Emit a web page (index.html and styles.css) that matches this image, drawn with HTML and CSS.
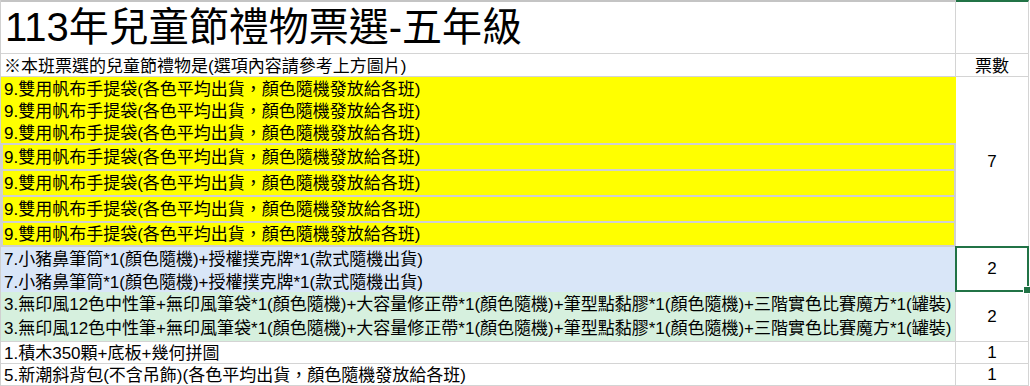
FILE: index.html
```html
<!DOCTYPE html>
<html lang="zh-Hant">
<head>
<meta charset="utf-8">
<title>113年兒童節禮物票選-五年級</title>
<link rel="stylesheet" href="styles.css">
</head>
<body>
<div class="sheet">
  <div class="cell a title">113年兒童節禮物票選-五年級</div>
  <div class="cell b title-b"></div>

  <div class="cell a hdr">※本班票選的兒童節禮物是(選項內容請參考上方圖片)</div>
  <div class="cell b hdr">票數</div>

  <div class="cell a group yellow">
    <div class="line">9.雙用帆布手提袋(各色平均出貨，顏色隨機發放給各班)</div>
    <div class="line">9.雙用帆布手提袋(各色平均出貨，顏色隨機發放給各班)</div>
    <div class="line">9.雙用帆布手提袋(各色平均出貨，顏色隨機發放給各班)</div>
    <div class="line boxed">9.雙用帆布手提袋(各色平均出貨，顏色隨機發放給各班)</div>
    <div class="line boxed">9.雙用帆布手提袋(各色平均出貨，顏色隨機發放給各班)</div>
    <div class="line boxed">9.雙用帆布手提袋(各色平均出貨，顏色隨機發放給各班)</div>
    <div class="line boxed last">9.雙用帆布手提袋(各色平均出貨，顏色隨機發放給各班)</div>
  </div>
  <div class="cell b num g-yellow">7</div>

  <div class="cell a group blue">
    <div class="line">7.小豬鼻筆筒*1(顏色隨機)+授權撲克牌*1(款式隨機出貨)</div>
    <div class="line l23">7.小豬鼻筆筒*1(顏色隨機)+授權撲克牌*1(款式隨機出貨)</div>
  </div>
  <div class="cell b num g-blue selected">2</div>

  <div class="cell a group green">
    <div class="line l25">3.無印風12色中性筆+無印風筆袋*1(顏色隨機)+大容量修正帶*1(顏色隨機)+筆型點黏膠*1(顏色隨機)+三階實色比賽魔方*1(罐裝)</div>
    <div class="line l24">3.無印風12色中性筆+無印風筆袋*1(顏色隨機)+大容量修正帶*1(顏色隨機)+筆型點黏膠*1(顏色隨機)+三階實色比賽魔方*1(罐裝)</div>
  </div>
  <div class="cell b num g-green">2</div>

  <div class="cell a row">1.積木350顆+底板+幾何拼圖</div>
  <div class="cell b num row">1</div>

  <div class="cell a row">5.新潮斜背包(不含吊飾)(各色平均出貨，顏色隨機發放給各班)</div>
  <div class="cell b num row">1</div>
</div>
</body>
</html>
```

FILE: styles.css
```css
* { box-sizing: border-box; }

html, body {
  margin: 0;
  padding: 0;
  background: #ffffff;
}

body {
  font-family: "Liberation Sans", "Noto Sans CJK TC", sans-serif;
  color: #000000;
  font-size: 17px;
}

.sheet {
  display: grid;
  grid-template-columns: 955px 73px;
  width: 1029px;
  border-left: 1px solid #d0d0d0;
}

.cell {
  border-right: 1px solid #d4d4d4;
  border-bottom: 1px solid #d4d4d4;
  white-space: nowrap;
  overflow: hidden;
}

.a { padding-left: 3px; }

.title {
  height: 54px;
  border-top: 2px solid #c4c4c4;
  font-size: 40px;
  line-height: 51px;
  padding-left: 4px;
}

.title-b {
  height: 54px;
  border-top: 2px solid #217346;
}

.hdr {
  height: 23px;
  line-height: 22px;
  padding-top: 2px;
}

.b.hdr { text-align: center; }

.num {
  display: flex;
  align-items: center;
  justify-content: center;
}

.group {
  padding-left: 0;
  border-bottom: none;
  display: flex;
  flex-direction: column;
}

.line {
  height: 22px;
  line-height: 22px;
  padding-left: 3px;
  padding-top: 2px;
  overflow: hidden;
}

.l23 { height: 23px; line-height: 23px; }
.l25 { height: 25px; line-height: 25px; padding-top: 0; }
.l24 { height: 24px; line-height: 24px; padding-top: 0; }

.yellow {
  background: #ffff00;
  border-right: none;
}

.yellow .line.boxed {
  height: 26px;
  line-height: 24px;
  padding-top: 1px;
  border: 2px solid #d0d0d0;
  border-bottom: none;
  padding-left: 1px;
}

.yellow .line.boxed.last {
  height: 26px;
  line-height: 22px;
  border-bottom: 2px solid #d0d0d0;
}

.g-yellow { height: 170px; }

.blue { background: #d9e6f8; }
.g-blue { height: 45px; }

.green {
  background: #d6f0de;
  border-bottom: 1px solid #d4d4d4;
}
.g-green { height: 50px; }

.row {
  height: 22px;
  line-height: 21px;
}

.a.row { padding-top: 1px; }

.selected {
  position: relative;
  overflow: visible;
}

.selected::after {
  content: "";
  position: absolute;
  left: -1px;
  top: -1px;
  right: -1px;
  bottom: -1px;
  border: 2px solid #217346;
}

.selected::before {
  content: "";
  position: absolute;
  right: -3px;
  bottom: -3px;
  width: 6px;
  height: 6px;
  background: #217346;
  border: 1px solid #ffffff;
  z-index: 1;
}
```
